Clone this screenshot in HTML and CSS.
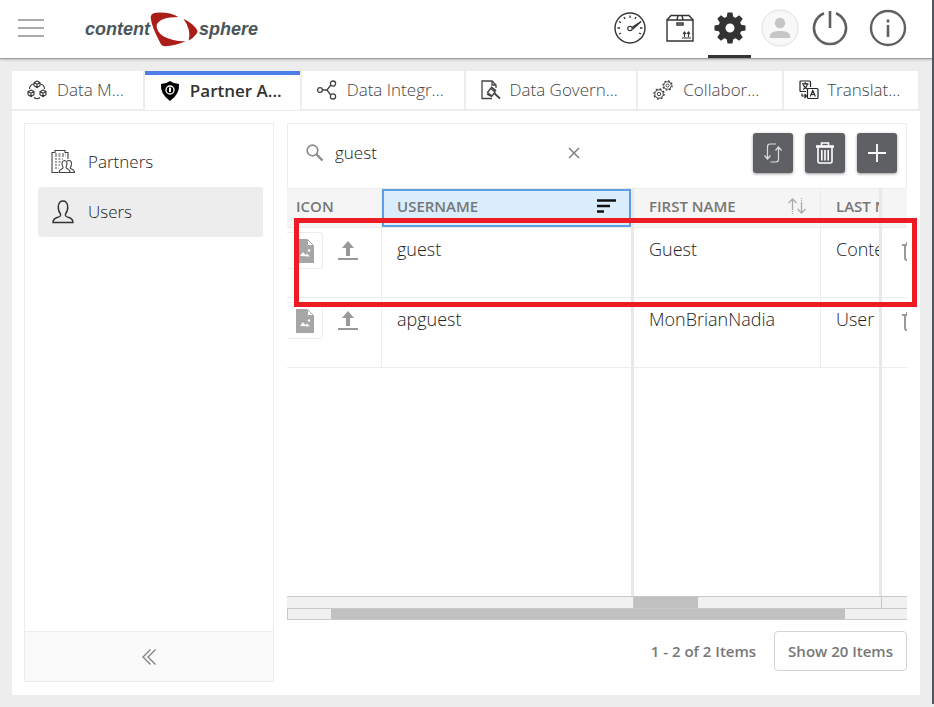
FILE: index.html
```html
<!DOCTYPE html>
<html lang="en">
<head>
<meta charset="utf-8">
<meta name="viewport" content="width=device-width, initial-scale=1">
<title>contentSphere - Users</title>
<link rel="stylesheet" href="styles.css">
</head>
<body>
<svg class="defs" aria-hidden="true">
  <symbol id="i-file" viewBox="0 0 18 24">
    <path fill="#a6a6a6" d="M0 0h11v7h7v17H0z"/><path fill="none" stroke="#a6a6a6" d="M11.500 .5l6 6h-6z"/>
    <path fill="#fff" d="M4 17l3-4 2.500 3 1.500-1.500 3 3z"/><circle cx="13" cy="11.500" r="1.200" fill="#fff"/>
  </symbol>
  <symbol id="i-upload" viewBox="0 0 20 19">
    <path fill="#999" d="M10 0l6 7h-4v8H8V7H4z"/><path fill="#999" d="M0 17h20v2H0z"/>
  </symbol>
  <symbol id="i-bin" viewBox="0 0 16 19">
    <path fill="none" stroke="#999" stroke-width="2" d="M0 3h16M3 3v13q0 2 2 2h6q2 0 2-2V3M5 3V1h6v2"/>
  </symbol>
  <symbol id="i-cog" viewBox="-6 -6 12 12">
    <circle r="4.200" fill="none" stroke="#333" stroke-width=".9"/><circle r="5.100" fill="none" stroke="#333" stroke-width="1.200" stroke-dasharray="2 2"/><circle r="1.700" fill="none" stroke="#333" stroke-width=".9"/>
  </symbol>
</svg>

<div class="window">
<div class="app">
  <header class="header">
    <button class="icon-btn menu" aria-label="Menu">
      <svg width="26" height="18" viewBox="0 0 26 18"><path stroke="#aaa" stroke-width="2" d="M0 1h26M0 9h26M0 17h26"/></svg>
    </button>
    <a class="logo" href="#">
      <span>content</span>
      <svg width="49" height="36" viewBox="452 32 148 108" aria-hidden="true">
        <path fill="#ab1e18" d="M454 52Q454 39 470 37Q510 34 538 50Q482 50 472 74Q471 94 492 108Q522 124 560 123Q528 136 498 138Q488 138 483 128Q457 80 454 52Z"/>
        <path fill="#ab1e18" d="M553 55Q580 68 594 88Q598 94 592 101Q583 113 569 121Q577 88 553 55Z"/>
      </svg>
      <span>sphere</span>
    </a>
    <nav class="actions" aria-label="Main">
      <button class="icon-btn" aria-label="Dashboard">
        <svg width="32" height="32" viewBox="-16 -16 32 32" fill="none" stroke="#333"><circle r="15" stroke-width="1.400"/><circle cy=".5" r="2.200" stroke-width="1.200"/><path stroke-width="1.300" d="M2-.5L11-6.500 2.500 1.200"/><path stroke-width="1.300" d="M0-12.500v2.500M-6-11l1 2M6-11l-1 2M-11-6.500l2 1.200M-12.500 0h2.500M12.500 0H10M-11 6l2-1M11 6l-2-1"/></svg>
      </button>
      <button class="icon-btn" aria-label="Packages">
        <svg width="28" height="28" viewBox="0 0 28 28" fill="none" stroke="#333" stroke-width="1.400"><path d="M1 6h26v21H1zM1 6l4-4.500h18L27 6M11 6l1-4.500M17 6l-1-4.500"/><path d="M11 9h6v2h-6z"/><path d="M16 24h9M18.500 23v-4.500M22.500 23v-4.500M17 20l1.500-2 1.500 2M21 20l1.500-2 1.500 2" stroke-width="1.100"/></svg>
      </button>
      <button class="icon-btn active" aria-label="Administration">
        <svg width="32" height="32" viewBox="-16 -16 32 32"><g fill="#333"><path fill-rule="evenodd" d="M0-11.500A11.500 11.500 0 1 1 0 11.500A11.500 11.500 0 1 1 0-11.500zM0-4.500A4.500 4.500 0 1 0 0 4.500A4.500 4.500 0 1 0 0-4.500z"/><path id="tooth" d="M-3.500-10L-2.500-15.500h5L3.500-10z"/><use href="#tooth" transform="rotate(45)"/><use href="#tooth" transform="rotate(90)"/><use href="#tooth" transform="rotate(135)"/><use href="#tooth" transform="rotate(180)"/><use href="#tooth" transform="rotate(225)"/><use href="#tooth" transform="rotate(270)"/><use href="#tooth" transform="rotate(315)"/></g></svg>
      </button>
      <button class="icon-btn" aria-label="Profile">
        <svg width="38" height="38" viewBox="-19 -19 38 38"><circle r="18" fill="#f8f8f8" stroke="#ddd"/><circle cy="-5" r="5.200" fill="#c6c6c6"/><path fill="#c6c6c6" d="M-10 10V8Q-10 3 0 3T10 8V10z"/></svg>
      </button>
      <button class="icon-btn" aria-label="Log out">
        <svg width="36" height="36" viewBox="-18 -18 36 36" fill="none" stroke="#606060" stroke-width="2.600"><path d="M-6-14.800A16 16 0 1 0 6-14.800M0-17V0"/></svg>
      </button>
      <button class="icon-btn info" aria-label="Information">
        <svg width="38" height="38" viewBox="-19 -19 38 38"><circle r="17" fill="none" stroke="#606060" stroke-width="2.400"/><path fill="#606060" d="M-1.300-8.500h2.600v3h-2.600zM-1.300-3h2.600V9h-2.600z"/></svg>
      </button>
    </nav>
  </header>

  <nav class="tabs" aria-label="Sections">
    <a class="tab" href="#">
      <svg width="20" height="20" viewBox="0 0 20 20" fill="none" stroke="#333" stroke-width="1.100"><path id="cube" d="M10 1l3 1.600v3.200L10 7.500 7 5.800V2.600zM7 2.600l3 1.700 3-1.700M10 4.300v3.200"/><use href="#cube" x="-6" y="9"/><use href="#cube" x="6" y="9"/><path d="M6.500 4Q2.500 5 2.500 9M13.500 4Q17.500 5 17.500 9M7 17.500Q10 20 13 17.500"/></svg>
      <span>Data M...</span>
    </a>
    <a class="tab current" href="#" aria-current="page">
      <svg width="20" height="20" viewBox="0 0 20 20"><path fill="#000" d="M10 0Q14 3 19 3Q20 13 10 20Q0 13 1 3Q6 3 10 0z"/><circle cx="10" cy="9" r="4" fill="none" stroke="#fff" stroke-width="1.300"/><path fill="#fff" d="M9 6.500h2V11H9z"/></svg>
      <span>Partner A...</span>
    </a>
    <a class="tab" href="#">
      <svg width="20" height="20" viewBox="0 0 20 20" fill="none" stroke="#444" stroke-width="1.300"><circle cx="3" cy="10" r="2.400"/><circle cx="16" cy="3.600" r="2.600"/><circle cx="16" cy="16.400" r="2.600"/><path d="M5.400 10H10L13.800 5M10 10l3.800 5"/></svg>
      <span>Data Integr...</span>
    </a>
    <a class="tab tight" href="#">
      <svg width="20" height="20" viewBox="0 0 20 20" fill="none" stroke="#444" stroke-width="1.300"><path d="M11 18.500H1V1h10l4 4v3M11 1v4h4"/><path d="M6 14l5 2.500M10 7l5 4M13 13l6 5.500" stroke-width="1.800"/><path d="M9.500 8.500l4.500 3.500-3 4-4.500-3.500z"/></svg>
      <span>Data Govern...</span>
    </a>
    <a class="tab" href="#">
      <svg width="20" height="20" viewBox="0 0 20 20"><use href="#i-cog" x="0" y="8" width="12" height="12"/><use href="#i-cog" x="9" y="0" width="11" height="11"/></svg>
      <span>Collabor...</span>
    </a>
    <a class="tab tight" href="#">
      <svg width="20" height="20" viewBox="0 0 20 20" fill="none" stroke="#222" stroke-width="1.200"><path d="M7 11.500H2Q1 11.500 1 10.500V2Q1 1 2 1h8.500Q11.500 1 11.500 2v5"/><path d="M3 3.800h6.500M6.200 2.200v1.600M4 9.500Q8 7.500 8.300 4M4.300 5Q5.500 8 9 9.200"/><rect x="8.500" y="8.500" width="10.500" height="10" rx="1"/><path d="M11.300 16.500l2.500-6 2.500 6M12.200 14.500h3.200M3 13.500V16h4M5.500 14l2 2-2 2"/></svg>
      <span>Translat...</span>
    </a>
  </nav>

  <main class="panel">
    <aside class="sidebar">
      <nav class="side-nav" aria-label="Partner administration">
        <a class="side-link" href="#">
          <svg width="24" height="24" viewBox="0 0 24 24" fill="none" stroke="#444" stroke-width="1.100"><path d="M7 22.500H1V2.500h3V.5h10v2h3V9"/><path stroke-dasharray="2 1.500" d="M4 6h11M4 9h8M4 12h6M4 15h5M4 18h4M4 4h11"/><path d="M8 22.500Q8 20 11.500 18.500Q12.500 18 11.500 16Q10 11 13.500 10.500Q17 11 15.500 16Q14.500 18 16 18.500Q19 20 19 22.500zM16 11Q20 9.500 20.500 13Q20.500 16 19.500 17.500Q19 18.500 20.500 19Q23.500 20 23.500 22.500H19"/></svg>
          <span>Partners</span>
        </a>
        <a class="side-link selected" href="#" aria-current="page">
          <svg width="24" height="24" viewBox="0 0 24 24" fill="none" stroke="#333" stroke-width="1.400"><path d="M2 22.500Q2 19 6 17.500Q10.500 16.500 9.500 14Q7 11 7.300 6Q8 1 12 1T16.700 6Q17 11 14.500 14Q13.500 16.500 18 17.500Q22 19 22 22.500z"/></svg>
          <span>Users</span>
        </a>
      </nav>
      <button class="collapse" aria-label="Collapse sidebar">
        <svg width="14" height="16" viewBox="0 0 14 16" fill="none" stroke="#808080" stroke-width="1.300"><path d="M8.500 .5L1 8l7.500 7.500M13.500 .5L6 8l7.500 7.500"/></svg>
      </button>
    </aside>

    <section class="content">
      <div class="toolbar">
        <label class="search">
          <svg width="18" height="18" viewBox="0 0 18 18" fill="none" stroke="#8a8a8a"><circle cx="6.500" cy="6.500" r="5.300" stroke-width="1.700"/><path stroke-width="2.400" d="M10.500 10.500l6 6"/></svg>
          <input type="text" value="guest" aria-label="Search users">
        </label>
        <button class="icon-btn clear" aria-label="Clear search">
          <svg width="12" height="12" viewBox="0 0 12 12" stroke="#808080" stroke-width="1.500"><path d="M1 1l10 10M11 1L1 11"/></svg>
        </button>
        <div class="tools">
          <button class="tool" aria-label="Refresh"><svg width="20" height="20" viewBox="0 0 20 20" fill="none" stroke="#ddd" stroke-width="1.200"><path d="M13 1H7Q4.500 1 4.500 4v11.500M1.500 12.500l3 3.500 3-3.500M7.500 19H13Q15.500 19 15.500 16V4.500M12.500 7.500l3-3.500 3 3.500"/></svg></button>
          <button class="tool" aria-label="Delete"><svg width="20" height="22" viewBox="0 0 20 22" fill="none" stroke="#fff"><path stroke-width="2.600" d="M1 4.500h18"/><path stroke-width="1.600" d="M6.500 4V1h7v3M3 5.500V19.500Q3 21 4.500 21h11Q17 21 17 19.500V5.500M6.800 8v10.500M10 8v10.500M13.200 8v10.500"/></svg></button>
          <button class="tool" aria-label="Add"><svg width="20" height="20" viewBox="0 0 20 20" stroke="#fff" stroke-width="1.800"><path d="M10 1v18M1 10h18"/></svg></button>
        </div>
      </div>

      <div class="grid">
        <table>
          <colgroup><col class="c-icon"><col class="c-user"><col class="c-first"><col class="c-last"><col class="c-more"></colgroup>
          <thead>
            <tr>
              <th scope="col" class="icon-head">Icon</th>
              <th scope="col" class="lock sorted" aria-sort="descending"><div class="head">Username <svg width="20" height="14" viewBox="0 0 20 14" stroke="#111" stroke-width="2.400"><path d="M0 1.500h19M0 7h13M0 12.500h7"/></svg></div></th>
              <th scope="col"><div class="head">First name <svg width="18" height="16" viewBox="0 0 18 16" fill="none" stroke="#aaa" stroke-width="1.300"><path d="M4.500 11V1M.5 5l4-4 4 4M13.500 5v10M9.500 11l4 4 4-4"/><path stroke-dasharray="1 1" d="M4.500 11v5M13.500 0v5"/></svg></div></th>
              <th scope="col" class="lock">Last name</th>
              <td class="more"></td>
            </tr>
          </thead>
          <tbody>
            <tr>
              <td class="icons"><div class="thumbs"><span class="thumb"><svg width="18" height="24"><use href="#i-file"/></svg></span><button class="icon-btn" aria-label="Upload icon for guest"><svg width="20" height="19"><use href="#i-upload"/></svg></button></div></td>
              <td class="lock">guest</td><td>Guest</td><td class="lock">Content</td>
              <td class="more"><button class="icon-btn" aria-label="Delete guest"><svg width="16" height="19"><use href="#i-bin"/></svg></button></td>
            </tr>
            <tr>
              <td class="icons"><div class="thumbs"><span class="thumb"><svg width="18" height="24"><use href="#i-file"/></svg></span><button class="icon-btn" aria-label="Upload icon for apguest"><svg width="20" height="19"><use href="#i-upload"/></svg></button></div></td>
              <td class="lock">apguest</td><td>MonBrianNadia</td><td class="lock">User</td>
              <td class="more"><button class="icon-btn" aria-label="Delete apguest"><svg width="16" height="19"><use href="#i-bin"/></svg></button></td>
            </tr>
          </tbody>
        </table>
        <div class="empty"><span></span><span></span><span></span></div>
        <div class="bars"><span></span><span><i class="thumb-small"></i></span><span></span></div>
        <div class="bar"><i class="thumb-wide"></i></div>
      </div>

      <footer class="pager">
        <span>1 - 2 of 2 Items</span>
        <button class="page-size">Show 20 Items</button>
      </footer>
      <div class="highlight"></div>
    </section>
  </main>
</div>
<div class="edge"></div>
</div>
</body>
</html>
```
FILE: styles.css
```css
* { box-sizing: border-box; }

body {
  margin: 0;
  background: #ededed;
  color: #222;
  font: 300 17px/24px "Open Sans", "Noto Sans", sans-serif;
}

button, input { font: inherit; color: inherit; }
a { color: inherit; text-decoration: none; }
svg { display: block; flex: none; }
.defs { position: absolute; width: 0; height: 0; }

.window { display: flex; min-height: 100vh; }
.app { flex: 1; min-width: 0; display: flex; flex-direction: column; }
.edge { width: 2px; margin-bottom: 3px; background: #50575e; }

.icon-btn {
  display: flex;
  align-items: center;
  justify-content: center;
  padding: 0;
  border: 0;
  background: none;
}

.header {
  display: flex;
  align-items: center;
  height: 59px;
  padding: 0 23px 0 18px;
  background: #fff;
  border-bottom: 1px solid #a0a0a0;
  box-shadow: 0 1px 2px #bbb;
}

.menu { padding-bottom: 2px; }

.logo {
  display: flex;
  align-items: center;
  margin-left: 41px;
  color: #4a5559;
  font: italic bold 18px/24px "Liberation Sans", sans-serif;
}

.actions { display: flex; gap: 7px; height: 100%; margin-left: auto; }
.actions .icon-btn { width: 43px; border-bottom: 3px solid transparent; }
.actions .active { border-color: #333; }
.actions .info { margin-left: 8px; }

.tabs {
  display: grid;
  grid-template-columns: 131fr 155fr 163fr 170fr 144fr 134fr;
  gap: 2px;
  margin: 12px 14px 0 12px;
}

.tab {
  display: flex;
  align-items: center;
  gap: 10px;
  height: 38px;
  margin-bottom: 2px;
  padding-left: 15px;
  background: #fff;
  color: #444;
  white-space: nowrap;
}

.tab.tight { gap: 8px; }

.tab.current {
  height: 39px;
  margin-bottom: 1px;
  border-top: 4px solid #4c7fe8;
  padding-bottom: 4px;
  color: #333;
  font-weight: 600;
}

.panel {
  flex: 1;
  display: flex;
  gap: 13px;
  margin: 0 12px 12px;
  padding: 12px 13px 13px 12px;
  background: #fff;
}

.sidebar {
  flex: none;
  width: 250px;
  display: flex;
  flex-direction: column;
  border: 1px solid #ececec;
}

.side-nav { flex: 1; padding: 13px 10px 13px 13px; }

.side-link {
  display: flex;
  align-items: center;
  gap: 13px;
  height: 50px;
  padding-left: 13px;
  border-radius: 3px;
}

.side-link.selected { background: #ededed; }

.collapse {
  display: flex;
  align-items: center;
  justify-content: center;
  height: 50px;
  border: 0;
  border-top: 1px solid #ececec;
  background: #fafafa;
}

.content {
  position: relative;
  flex: 1;
  min-width: 0;
  display: flex;
  flex-direction: column;
}

.toolbar {
  display: flex;
  align-items: center;
  height: 65px;
  padding: 0 9px 6px 18px;
  border: 1px solid #ececec;
  border-bottom: 0;
}

.search { display: flex; align-items: center; gap: 11px; width: 251px; }
.search input { min-width: 0; flex: 1; padding: 0; border: 0; outline: 0; background: none; }
.clear { width: 34px; height: 34px; }

.tools { display: flex; gap: 12px; margin-left: auto; }

.tool {
  display: flex;
  align-items: center;
  justify-content: center;
  width: 40px;
  height: 40px;
  padding: 0;
  border: 0;
  border-radius: 3px;
  background: #5f6064;
  box-shadow: 0 1px 3px #999;
}

.grid { flex: 1; display: flex; flex-direction: column; }

table {
  width: 100%;
  table-layout: fixed;
  border-collapse: separate;
  border-spacing: 0;
}

.c-icon { width: 95px; }
.c-user { width: 252px; }
.c-last { width: 61px; }
.c-more { width: 25px; }

th, td {
  overflow: hidden;
  border-right: 1px solid #ececec;
  border-bottom: 1px solid #ececec;
  text-align: left;
  white-space: nowrap;
}

thead th, thead td {
  height: 40px;
  padding: 0 14px 4px 15px;
  border-top: 1px solid #ececec;
  background: #f5f5f5;
  color: #777;
  font-size: 15px;
  line-height: 20px;
  font-weight: 600;
  text-transform: uppercase;
}

thead .icon-head { padding-left: 9px; }
.head { display: flex; align-items: center; justify-content: space-between; }

tbody td { height: 70px; padding: 9px 0 0 15px; vertical-align: top; font-size: 18px; }
.lock { border-right: 3px solid #e8e8e8; }
thead .lock { padding-right: 0; }
.lock .head { padding-right: 14px; }
.sorted { background-clip: padding-box; box-shadow: inset 0 0 0 2px #5c9fe0; }
thead .sorted { background-color: #d9edfd; }
td.more, thead .more { padding-right: 0; border-right: 0; }
tbody .more { padding-top: 14px; padding-left: 20px; }

tbody .icons { padding: 4px 0 0; }
.thumbs { display: flex; align-items: center; gap: 15px; }

.thumb {
  display: flex;
  align-items: center;
  width: 36px;
  height: 37px;
  padding-left: 9px;
  border: 1px solid #ececec;
  border-left: 0;
  border-radius: 0 4px 4px 0;
}

.empty, .bars { display: grid; grid-template-columns: 347px 1fr 25px; }
.empty { flex: 1; }
.empty span { border-right: 3px solid #e8e8e8; }
.empty span:last-child { border: 0; }

.bars span, .bar {
  height: 12px;
  border-top: 1px solid #c8c8c8;
  background: #f1f1f1;
}

.bars span { border-right: 1px solid #c8c8c8; }
.bars span:last-child { border-right: 0; }
.bar { border-bottom: 1px solid #c8c8c8; border-left: 1px solid #c8c8c8; }
.bars i, .bar i { display: block; height: 100%; background: #c1c1c1; }
.thumb-small { width: 26%; }
.bar .thumb-wide { width: 83%; margin-left: 7%; }

.pager {
  display: flex;
  align-items: center;
  justify-content: flex-end;
  gap: 18px;
  margin: 11px 0;
  color: #777;
  font-size: 15px;
  font-weight: 600;
}

.page-size {
  height: 40px;
  padding: 0 13px;
  border: 1px solid #d4d4d4;
  border-radius: 4px;
  background: #fff;
}

.highlight {
  position: absolute;
  top: 95px;
  left: 7px;
  right: -10px;
  height: 89px;
  border: 5px solid #ed1c24;
  pointer-events: none;
}
```
